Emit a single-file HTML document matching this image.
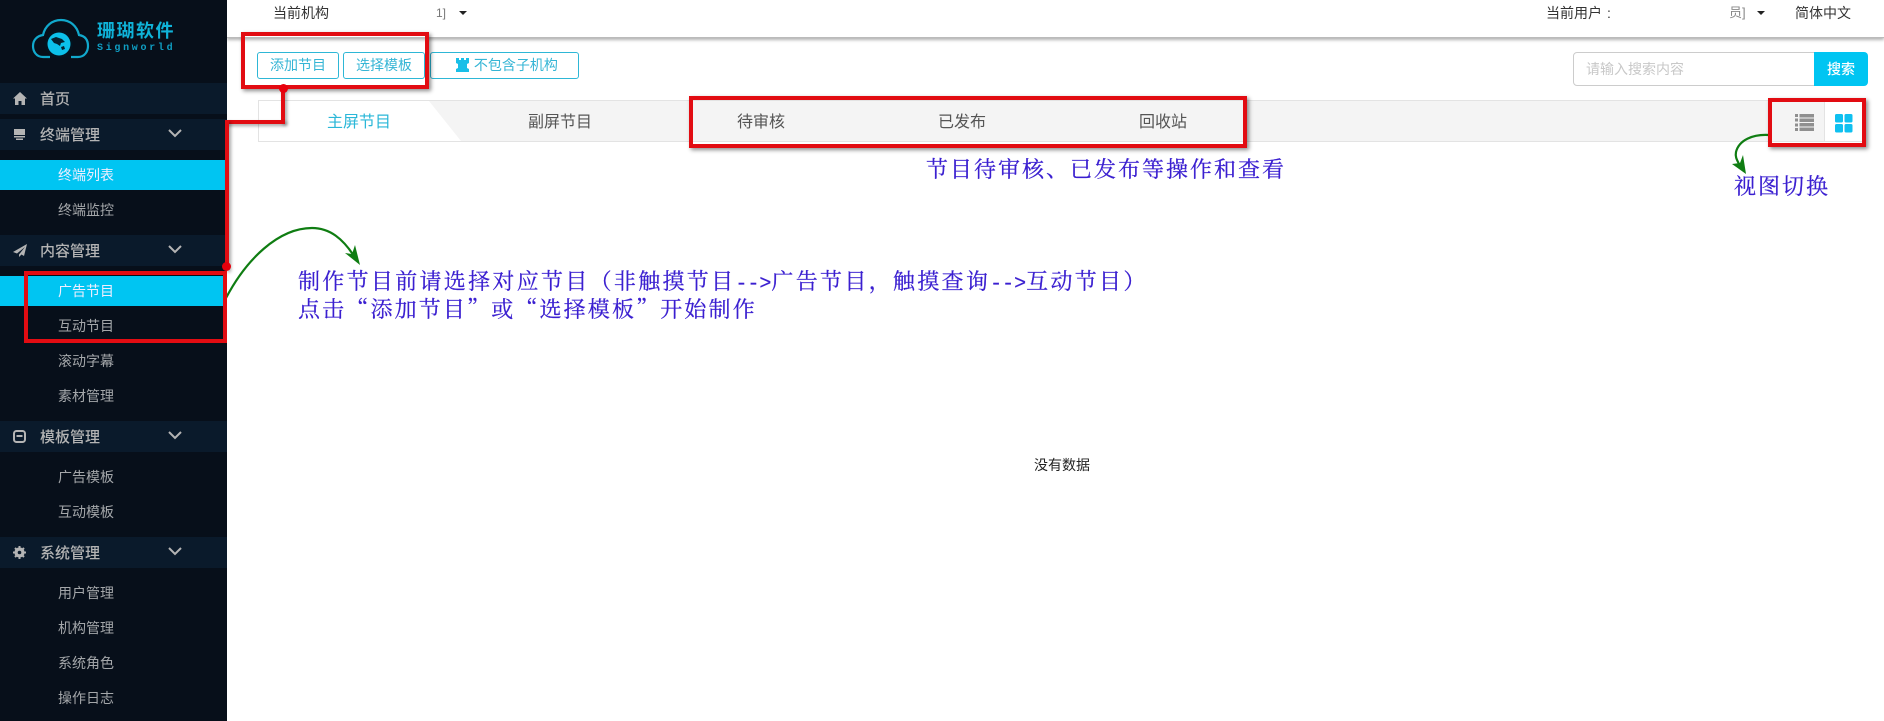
<!DOCTYPE html>
<html lang="zh-CN"><head><meta charset="utf-8"><title>节目管理</title>
<style>
*{box-sizing:border-box}
html,body{margin:0;padding:0;width:1884px;height:721px;overflow:hidden;background:#fff;font-family:"Liberation Sans","Noto Sans CJK SC",sans-serif;font-size:14px;color:#333}
.a{position:absolute;white-space:nowrap}
#side{position:absolute;left:0;top:0;width:227px;height:721px;background:#070f1a}
.hd{position:absolute;left:0;width:227px;height:31px;background:#0a1a2b;color:#b4b4b4;font-size:15px;font-weight:500;line-height:33px;padding-left:40px}
.sub{position:absolute;left:0;width:227px;height:30px;line-height:31px;padding-left:58px;color:#a4a7aa;font-size:14px}
.sub.on{background:#00c5f2;color:#eef;}
.hd svg{position:absolute}
.chev{position:absolute;left:168px;top:10px}
.btn{position:absolute;top:52px;height:27px;border:1px solid #2eb7d6;border-radius:3px;color:#35b5d5;text-align:center;line-height:25px;font-size:14px;background:#fff}
.tab{position:absolute;top:102px;height:41px;line-height:41px;font-size:16px;color:#555;transform:translateX(-50%);white-space:nowrap}
.blue{position:absolute;white-space:nowrap;color:#3a1fd0;font-family:"Noto Serif CJK SC",serif;font-size:22px;line-height:26px;letter-spacing:2px;-webkit-text-stroke:.25px #3a1fd0}
.blue i{font-family:"Liberation Mono",monospace;font-style:normal;font-size:20px;letter-spacing:0}
.r{position:absolute;border:4px solid #e20c12;box-shadow:2px 2px 4px rgba(0,0,0,.45)}
.rl{position:absolute;background:#e20c12;box-shadow:2px 2px 3px rgba(0,0,0,.35)}
.dot{position:absolute;width:9px;height:9px;border-radius:50%;background:#e8000c}
</style></head><body>

<div class="a" style="left:227px;top:0;width:1657px;height:38px;background:#fff;border-bottom:1px solid #bbb;box-shadow:0 2px 3px rgba(0,0,0,.3)"></div>
<div class="a" style="left:273px;top:3px;line-height:20px;font-size:14px">当前机构</div>
<div class="a" style="left:436px;top:3px;line-height:20px;font-size:12px;color:#777">1]</div>
<div class="a" style="left:459px;top:11px;border:4px solid transparent;border-top:4px solid #222"></div>
<div class="a" style="left:1546px;top:3px;line-height:20px;font-size:14px">当前用户</div>
<div class="a" style="left:1607px;top:3px;line-height:20px;font-size:14px">:</div>
<div class="a" style="left:1729px;top:3px;line-height:20px;font-size:13px;color:#888">员]</div>
<div class="a" style="left:1757px;top:11px;border:4px solid transparent;border-top:4px solid #222"></div>
<div class="a" style="left:1795px;top:3px;line-height:20px;font-size:14px">简体中文</div>

<div class="btn" style="left:257px;width:82px">添加节目</div>
<div class="btn" style="left:343px;width:82px">选择模板</div>
<div class="btn" style="left:430px;width:149px;padding-left:4px"><svg width="15" height="15" viewBox="0 0 15 15" style="vertical-align:-2px"><path fill="#19bfe8" d="M1 1h3v2h2V1h3v2h2V1h3v5l-2 1v4l2 1v3H1v-3l2-1V7L1 6z"/></svg> 不包含子机构</div>

<div class="a" style="left:1573px;top:52px;width:242px;height:34px;border:1px solid #ccc;border-radius:4px 0 0 4px;background:#fff;color:#c8c8c8;line-height:32px;padding-left:12px;font-size:14px">请输入搜索内容</div>
<div class="a" style="left:1814px;top:52px;width:54px;height:34px;background:#00c5f2;border-radius:0 4px 4px 0;color:#fff;text-align:center;line-height:34px;font-size:14px;font-weight:500">搜索</div>

<div class="a" style="left:258px;top:100px;width:1606px;height:42px;background:#f4f4f4;border:1px solid #e3e3e3"></div>
<svg class="a" style="left:259px;top:101px" width="205" height="40"><path d="M0 0H170L202 40H0z" fill="#fff"/></svg>
<div class="tab" style="left:359px;color:#2bb7d8">主屏节目</div>
<div class="tab" style="left:560px">副屏节目</div>
<div class="tab" style="left:761px">待审核</div>
<div class="tab" style="left:962px">已发布</div>
<div class="tab" style="left:1163px">回收站</div>
<div class="a" style="left:1824px;top:101px;width:40px;height:40px;background:#fff;border-left:1px solid #e3e3e3"></div>
<svg class="a" style="left:1795px;top:113px" width="19" height="19" viewBox="0 0 19 19"><g fill="#8f8f8f"><rect x="0" y="1" width="3" height="3"/><rect x="0" y="5.500" width="3" height="3"/><rect x="0" y="10.500" width="3" height="3"/><rect x="0" y="15" width="3" height="3"/><rect x="4.500" y="1" width="14.500" height="3.500"/><rect x="4.500" y="5.500" width="14.500" height="3.500"/><rect x="4.500" y="10" width="14.500" height="3.500"/><rect x="4.500" y="14.500" width="14.500" height="3.500"/></g></svg>
<svg class="a" style="left:1835px;top:114px" width="18" height="19" viewBox="0 0 18 19"><g fill="#0fc0f0"><rect width="8" height="8.500" rx="1.500"/><rect x="9.500" width="8" height="8.500" rx="1.500"/><rect y="10" width="8" height="8.500" rx="1.500"/><rect x="9.500" y="10" width="8" height="8.500" rx="1.500"/></g></svg>

<div class="a" style="left:1034px;top:455px;line-height:20px;font-size:14px;color:#222">没有数据</div>

<div id="side">
<svg class="a" style="left:30px;top:18px" width="62" height="42" viewBox="0 0 62 42"><path d="M20 39H13C6 39 3 33 3 28c0-6 4-10 10-11C15 8 22 2 31 2s16 6 18 15c6 1 9 5 9 11 0 5-3 11-10 11h-7" fill="none" stroke="#11a8cc" stroke-width="2.200"/><circle cx="29" cy="26" r="14" fill="#03131f"/><circle cx="29" cy="26" r="11.500" fill="#0cc0ea"/><path d="M21 21l5-2 6 2 3 3-4 1-1 3-3-2-3-1zM31 29l3-1 1 3-3 1z" fill="#05202e"/></svg>
<div class="a" style="left:97px;top:20px;font-size:18px;line-height:22px;font-weight:700;color:#0fb3d9;letter-spacing:1.500px">珊瑚软件</div>
<div class="a" style="left:97px;top:43px;font-size:10px;line-height:12px;font-weight:700;color:#0f9fc4;letter-spacing:2.700px;font-family:'Liberation Mono',monospace">Signworld</div>

<div class="hd" style="top:83px"><svg style="left:13px;top:9px" width="14" height="13" viewBox="0 0 14 13"><path fill="#b4b4b4" d="M7 0l7 6.500h-2V13H8.500V9h-3v4H2V6.500H0z"/></svg>首页</div>
<div class="hd" style="top:119px"><svg style="left:14px;top:9px" width="11" height="13" viewBox="0 0 11 13"><path fill="#b4b4b4" d="M0 1h11v6H0zM0 8h11v1.500H0zM2 10.500h7V12H2z"/></svg>终端管理<svg class="chev" width="14" height="9" viewBox="0 0 14 9"><path d="M1 1l6 6 6-6" fill="none" stroke="#b4b4b4" stroke-width="2"/></svg></div>
<div class="sub on" style="top:160px">终端列表</div>
<div class="sub" style="top:195px">终端监控</div>
<div class="hd" style="top:235px"><svg style="left:13px;top:9px" width="14" height="13" viewBox="0 0 14 13"><path fill="#b4b4b4" d="M14 0L0 8l4 1.500L12 3 6 10.500V13l2.500-2.500L11 12z"/></svg>内容管理<svg class="chev" width="14" height="9" viewBox="0 0 14 9"><path d="M1 1l6 6 6-6" fill="none" stroke="#b4b4b4" stroke-width="2"/></svg></div>
<div class="sub on" style="top:276px">广告节目</div>
<div class="sub" style="top:311px">互动节目</div>
<div class="sub" style="top:346px">滚动字幕</div>
<div class="sub" style="top:381px">素材管理</div>
<div class="hd" style="top:421px"><svg style="left:13px;top:9px" width="13" height="13" viewBox="0 0 13 13"><rect x="1" y="1" width="11" height="11" rx="2.500" fill="none" stroke="#b4b4b4" stroke-width="2"/><rect x="3.500" y="5" width="6" height="2" fill="#b4b4b4"/></svg>模板管理<svg class="chev" width="14" height="9" viewBox="0 0 14 9"><path d="M1 1l6 6 6-6" fill="none" stroke="#b4b4b4" stroke-width="2"/></svg></div>
<div class="sub" style="top:462px">广告模板</div>
<div class="sub" style="top:497px">互动模板</div>
<div class="hd" style="top:537px"><svg style="left:13px;top:9px" width="13" height="13" viewBox="0 0 13 13"><circle cx="6.500" cy="6.500" r="3.600" fill="none" stroke="#b4b4b4" stroke-width="3"/><path d="M6.500 0v13M0 6.500h13M2 2l9 9M11 2l-9 9" stroke="#b4b4b4" stroke-width="2"/><circle cx="6.500" cy="6.500" r="1.800" fill="#0a1a2b"/></svg>系统管理<svg class="chev" width="14" height="9" viewBox="0 0 14 9"><path d="M1 1l6 6 6-6" fill="none" stroke="#b4b4b4" stroke-width="2"/></svg></div>
<div class="sub" style="top:578px">用户管理</div>
<div class="sub" style="top:613px">机构管理</div>
<div class="sub" style="top:648px">系统角色</div>
<div class="sub" style="top:683px">操作日志</div>
</div>

<svg class="a" style="left:224px;top:220px" width="145" height="85" viewBox="0 0 145 85"><path d="M2 78C22 40 54 8 88 8c18 0 31 11 42 28" fill="none" stroke="#0f7d12" stroke-width="2.200"/><path d="M136 45L121 33l7 1 3-9z" fill="#0f7d12"/></svg>
<svg class="a" style="left:1725px;top:128px" width="50" height="48" viewBox="0 0 50 48"><path d="M44 7C28 6 14 12 11 24c-1 5 1 8 3 12" fill="none" stroke="#0f7d12" stroke-width="2.200"/><path d="M21 46L7 36l8-1 3-8z" fill="#0f7d12"/></svg>

<div class="r" style="left:241px;top:32px;width:188px;height:57px"></div>
<div class="rl" style="left:281px;top:88px;width:4px;height:35px"></div>
<div class="rl" style="left:225px;top:120px;width:60px;height:4px"></div>
<div class="rl" style="left:225px;top:120px;width:4px;height:150px"></div>
<div class="dot" style="left:279px;top:84px"></div>
<div class="dot" style="left:222px;top:262px"></div>
<div class="r" style="left:24px;top:271px;width:203px;height:72px;box-shadow:none"></div>
<div class="r" style="left:689px;top:96px;width:558px;height:52px"></div>
<div class="r" style="left:1768px;top:98px;width:98px;height:49px"></div>

<div class="blue" style="left:298px;top:268px;letter-spacing:2.300px">制作节目前请选择对应节目（非触摸节目<i>--&gt;</i>广告节目，触摸查询<i>--&gt;</i>互动节目）</div>
<div class="blue" style="left:298px;top:296px;letter-spacing:2.150px">点击“添加节目”或“选择模板”开始制作</div>
<div class="blue" style="left:926px;top:156px">节目待审核、已发布等操作和查看</div>
<div class="blue" style="left:1734px;top:173px">视图切换</div>
</body></html>
